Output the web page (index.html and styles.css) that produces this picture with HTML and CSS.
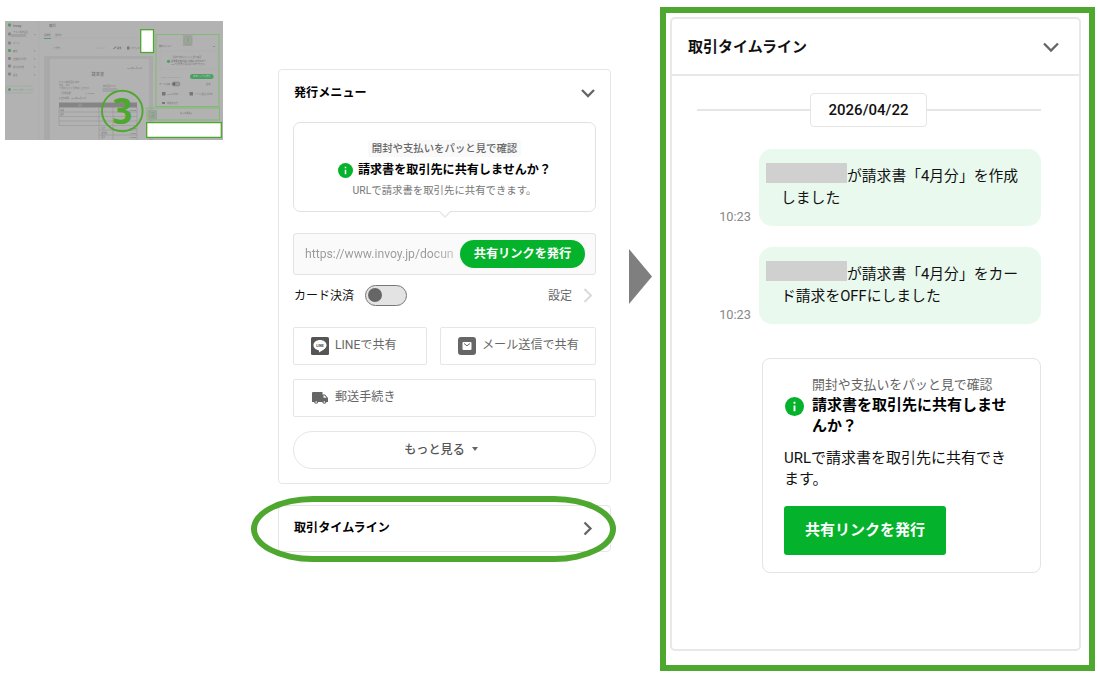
FILE: index.html
```html
<!DOCTYPE html>
<html lang="ja">
<head>
<meta charset="utf-8">
<title>取引タイムライン</title>
<link rel="stylesheet" href="styles.css">
</head>
<body>
<main class="page">
  <svg class="overview" width="218" height="119" viewBox="0 0 218 119">
    <rect width="218" height="119" fill="#b2b2b2"/>
    <rect x="39" y="35" width="109" height="84" fill="#a9a9a9"/>
    <rect x="45" y="38" width="99" height="81" fill="#b2b2b2"/>
    <path d="M34 0V119M34 17H148" stroke="#a9a9a9" stroke-width=".5"/>
    <path d="M39 17.500h7" stroke="#5e9c70" stroke-width="1"/>
    <g fill="#7b7b7b" class="tiny">
      <text x="8" y="5.500" class="tiny-head">invoy</text>
      <text x="8" y="12">テスト株式会社</text><text x="8" y="23">ホーム</text><text x="8" y="30.500" class="tiny-bold">取引</text>
      <text x="8" y="38.500">自動取引登録</text><text x="8" y="46.500">取引先管理</text><text x="8" y="54.500">設定</text>
      <text x="8" y="69.500" fill="#5e9c70" class="upgrade">アップグレード</text>
      <text x="40" y="5">‹</text><text x="44" y="5.500" class="tiny-head">取引</text>
      <text x="39" y="14.500" class="tiny-bold">請求書</text><text x="50" y="14.500">送付状</text>
      <text x="47" y="28">‹&#160; 下書き &#160;›</text><text x="90" y="28" fill="#999">プレビュー</text><text x="112" y="28" class="tiny-bold">編集</text><text x="126" y="28">ダウンロード</text>
      <text x="86.500" y="54.500" class="tiny-title">請求書</text>
      <text x="54" y="61.500">テスト株式会社 御中</text><text x="54" y="64.500" class="micro">件名：4月分</text><text x="54" y="67.500" class="micro">下記のとおりご請求申し上げます。</text>
      <text x="55" y="72.500">ご請求金額</text><text x="80" y="72.500">¥110,000</text><text x="54" y="77.500" class="micro">お支払期限：2026年05月31日</text>
      <text x="122" y="47.500" class="micro">2026年04月22日</text><text x="98" y="65.500" class="micro">株式会社テスト</text>
    </g>
    <g fill="#858585"><rect x="3" y="11.500" width="3" height="3" rx="1"/><rect x="3" y="20.500" width="3" height="3" rx="1"/><rect x="3" y="36" width="3" height="3" rx="1"/><rect x="3" y="43.500" width="3" height="3" rx="1"/><rect x="3" y="51.500" width="3" height="3" rx="1"/></g>
    <g fill="#559b69"><circle cx="4.500" cy="4" r="1.700"/><rect x="3" y="28" width="3" height="3" rx="1"/><circle cx="4.500" cy="68.500" r="1.500"/></g>
    <rect x="1" y="65" width="26" height="7" rx="1" fill="none" stroke="#8cab94" stroke-width=".5"/>
    <rect x="6" y="13" width="15" height="3" fill="#a1a1a1"/>
    <path d="M29 13l1 1 1-1M29 29l1 1-1 1M29 37l1 1-1 1M29 45l1 1-1 1M29 53l1 1-1 1" fill="none" stroke="#888" stroke-width=".6"/>
    <path d="M108.500 28l2.500-2.500" stroke="#666" stroke-width="1"/><rect x="122" y="25.500" width="2.500" height="3" fill="#777"/>
    <rect x="97.500" y="67" width="15" height="4" fill="#a3a3a3"/>
    <rect x="54" y="81.500" width="78" height="5" fill="#858585"/>
    <path d="M54 91h78M54 95.500h78M54 100h78M54 104.500h78M94 109h38M94 114h38M54 86v18.500M94 86v33M108 86v33M132 86v33" stroke="#969696" stroke-width=".6" fill="none"/>
    <g fill="#707070" class="micro"><text x="73" y="85" fill="#aaa">品目</text><text x="55" y="89.500">商品</text><text x="55" y="94">送料</text><text x="99" y="89.500">1</text><text x="124" y="89.500">100,000</text><text x="96" y="108">小計</text><text x="96" y="112.500">消費税</text><text x="96" y="117">合計</text><text x="124" y="108">100,000</text><text x="125" y="112.500">10,000</text><text x="124" y="117">110,000</text></g>
    <g fill="none" stroke="#80ba75" stroke-width="1"><rect x="151" y="13.500" width="63" height="72"/><rect x="142" y="87" width="72.500" height="12"/></g>
    <rect x="178" y="13" width="9.500" height="12" fill="#a2a2a2"/>
    <rect x="143" y="89" width="9" height="9.500" fill="#a2a2a2"/>
    <g fill="#63ad56" class="num-small"><text x="178.300" y="23">①</text><text x="143" y="97.300">②</text></g>
    <g fill="#777" class="tiny"><text x="154" y="26" class="tiny-bold">発行メニュー</text><text x="168" y="36.500" class="micro">開封や支払いをパッと見で確認</text><text x="166" y="41" class="tiny-bold">請求書を取引先に共有しませんか？</text><text x="166" y="44.300" class="micro">URLで請求書を取引先に共有できます。</text><text x="156" y="56.500" fill="#999">https://www.invoy.jp</text><text x="154" y="64">カード決済</text><text x="201" y="64">設定</text><text x="162" y="73.700">LINEで共有</text><text x="190" y="73.700">メール送信で共有</text><text x="162" y="83">郵送手続き</text><text x="175" y="93.300" class="tiny-bold">もっと見る ▾</text></g>
    <path d="M155 30h58v18h-58z" fill="none" stroke="#a8a8a8" stroke-width=".5"/>
    <circle cx="163.500" cy="40.300" r="1.600" fill="#4c9f65"/>
    <rect x="185" y="53" width="23.500" height="5" rx="2.500" fill="#4c9f65"/>
    <text x="188" y="56.400" fill="#bdd6c4" class="tiny">共有リンクを発行</text>
    <rect x="167" y="61" width="8" height="4" rx="2" fill="#999" stroke="#777" stroke-width=".5"/><circle cx="169" cy="63" r="1.400" fill="#666"/>
    <g fill="#777"><rect x="157" y="71" width="3.500" height="3.500"/><rect x="184.500" y="71" width="3.500" height="3.500"/><rect x="157" y="81" width="3" height="2"/></g>
    <path d="M208 25l1 1 1-1" fill="none" stroke="#777" stroke-width=".6"/>
    <rect x="135.700" y="8.700" width="12.800" height="22.800" fill="#fff" stroke="#4ea72e" stroke-width="1.300"/>
    <rect x="141.700" y="101.600" width="74.600" height="14.800" fill="#fff" stroke="#4ea72e" stroke-width="1.300"/>
    <circle cx="117.300" cy="90" r="20.300" fill="none" stroke="#4ea72e" stroke-width="1.900"/>
    <text x="117.200" y="103" text-anchor="middle" fill="#4ea72e" class="num-big">3</text>
  </svg>

  <section class="middle">
    <div class="card issue-card">
      <header class="head"><h2>発行メニュー</h2>
        <svg width="16" height="10" viewBox="0 0 16 10"><path d="M2 2l6 6 6-6" class="chev"/></svg></header>
      <div class="notice">
        <p class="caption">開封や支払いをパッと見で確認</p>
        <p class="question"><svg width="15" height="15" viewBox="0 0 20 20"><circle cx="10" cy="10" r="10" fill="#04b22b"/><path d="M9 5h2v2H9zM9 9h2v6H9z" fill="#fff"/></svg><b>請求書を取引先に共有しませんか？</b></p>
        <p class="sub">URLで請求書を取引先に共有できます。</p>
        <svg class="notch" width="14" height="8" viewBox="0 0 14 8"><path d="M1 0l6 6 6-6" fill="#fff" stroke="#e5e5e5" stroke-width="1.300"/></svg>
      </div>
      <div class="linkbox"><span class="url">https://www.invoy.jp/docun</span><button class="pill">共有リンクを発行</button></div>
      <div class="setting"><span>カード決済</span><i class="toggle"></i><span class="config">設定</span>
        <svg width="10" height="15" viewBox="0 0 10 15"><path d="M1.500 1l6.500 6.500L1.500 14" fill="none" stroke="#dadada" stroke-width="2"/></svg></div>
      <div class="shares">
        <div class="action"><svg width="18" height="18" viewBox="0 0 18 18"><rect width="18" height="18" rx="1.500" fill="#555"/><path d="M9 3C5.400 3 2.400 5.200 2.400 8.300c0 2.600 2.200 4.500 5 5 .9.200.7.800.6 2.200 3-1.500 7.600-4.200 7.600-7.200C15.600 5.200 12.600 3 9 3z" fill="#fff"/><text x="9" y="9.900" text-anchor="middle" class="line-word">LINE</text></svg>LINEで共有</div>
        <div class="action"><svg width="18" height="18" viewBox="0 0 18 18"><rect width="18" height="18" rx="3" fill="#666"/><rect x="4.500" y="5" width="9" height="8" rx="1" fill="#fff"/><path d="M6 6.500l3 2.300 3-2.300" fill="none" stroke="#666"/></svg>メール送信で共有</div>
      </div>
      <div class="action post"><svg width="18" height="14" viewBox="0 0 18 14"><path d="M2 1h9.500v2.500H14L17 7v4h-1.500a2.200 2.200 0 0 1-4.300 0H7.300a2.200 2.200 0 0 1-4.300 0H1V2a1 1 0 0 1 1-1z" fill="#666"/><path d="M12.500 4.500h1.200l1.800 2.300h-3z" fill="#fff"/><circle cx="5.200" cy="11" r=".8" fill="#fff"/><circle cx="13.300" cy="11" r=".8" fill="#fff"/></svg>郵送手続き</div>
      <button class="more">もっと見る<i></i></button>
    </div>
    <div class="card timeline-link"><h2>取引タイムライン</h2>
      <svg width="10" height="15" viewBox="0 0 10 15"><path d="M1.500 1.500l6 6-6 6" class="chev"/></svg>
      <div class="highlight"></div></div>
  </section>

  <svg class="arrow" width="24" height="56" viewBox="0 0 24 56"><path d="M0 0L23 27.500 0 55z" fill="#7f7f7f"/></svg>

  <section class="detail">
    <div class="panel">
      <header class="panel-head"><h2>取引タイムライン</h2>
        <svg width="18" height="12" viewBox="0 0 18 12"><path d="M2 2.500l7 7 7-7" class="chev"/></svg></header>
      <div class="feed">
        <div class="date"><span>2026/04/22</span></div>
        <div class="event"><time>10:23</time><p><i class="mask"></i>が請求書「4月分」を作成<br>しました</p></div>
        <div class="event"><time>10:23</time><p><i class="mask"></i>が請求書「4月分」をカー<br>ド請求をOFFにしました</p></div>
        <div class="promo">
          <div class="promo-title">
            <svg width="19" height="19" viewBox="0 0 20 20"><circle cx="10" cy="10" r="10" fill="#04b22b"/><path d="M9 5h2v2H9zM9 9h2v6H9z" fill="#fff"/></svg>
            <div><p class="promo-caption">開封や支払いをパッと見で確認</p><h3>請求書を取引先に共有しませ<br>んか？</h3></div>
          </div>
          <p class="promo-text">URLで請求書を取引先に共有でき<br>ます。</p>
          <button class="issue">共有リンクを発行</button>
        </div>
      </div>
    </div>
  </section>
</main>
</body>
</html>
```
FILE: styles.css
```css
* { box-sizing: border-box; }
body { margin: 0; background: #fff; color: #111; font-family: Roboto, "Noto Sans CJK JP", sans-serif; }
h2, h3, p { margin: 0; }
button { font-family: inherit; border: 0; padding: 0; }
svg { display: block; flex: none; }

.page { width: 1098px; height: 673px; display: flex; align-items: flex-start; overflow: hidden; }
.overview { margin: 21px 0 0 5px; }
.tiny { font-size: 2.200px; }
.tiny-bold { font-weight: 700; }
.tiny-head { font-size: 3.500px; font-weight: 700; }
.tiny-title { font-size: 4px; font-weight: 700; letter-spacing: .3px; }
.upgrade { font-size: 2.500px; }
.micro { font-size: 2px; }
.num-small { font-family: "Noto Sans CJK JP", sans-serif; font-size: 9px; }
.num-big { font-family: "Noto Sans", sans-serif; font-size: 35px; font-weight: 700; }

.chev { fill: none; stroke: #666; stroke-width: 2.300; }
.card { border: 1.500px solid #e6e6e6; border-radius: 4px; background: #fff; }
.middle { width: 333px; margin: 69px 0 0 55px; display: flex; flex-direction: column; gap: 21px; }
.middle h2 { font-size: 12.100px; line-height: 18px; font-weight: 700; color: #000; }
.issue-card { height: 415px; padding: 0 14px; }
.head { height: 52px; padding: 0 0 6px 1px; display: flex; align-items: center; justify-content: space-between; }
.notice { position: relative; height: 90px; border: 1px solid #e2e2e2; border-radius: 7px; padding-top: 17px; display: flex; flex-direction: column; align-items: center; }
.caption { font-size: 10.400px; line-height: 17px; font-weight: 500; color: #666; padding: 0 4px; background: #f9f9f9; border-radius: 3px; }
.question { display: flex; align-items: center; gap: 5px; font-size: 12.100px; line-height: 18px; margin-top: 4px; color: #000; }
.sub { font-size: 10.400px; line-height: 16px; margin-top: 4px; color: #777; }
.notch { position: absolute; left: 144px; bottom: -8px; }
.linkbox { height: 42px; margin-top: 21px; border: 1px solid #e3e3e3; border-radius: 3px; background: #fafafa; padding: 0 10px 0 11px; display: flex; align-items: center; gap: 6px; }
.url { width: 149px; white-space: nowrap; font-size: 12.200px; line-height: 18px; padding-bottom: 1px; color: transparent; background: linear-gradient(90deg, #999 85%, #c4c4c4); -webkit-background-clip: text; background-clip: text; }
.pill { width: 125px; height: 28px; border-radius: 14px; background: #04b22b; color: #fff; font-size: 12.200px; font-weight: 700; line-height: 26px; }
.setting { height: 40px; margin-bottom: 12px; padding-left: 1px; display: flex; align-items: center; font-size: 12px; }
.setting span { padding-bottom: 2px; }
.toggle { width: 42px; height: 21px; margin-left: 11px; border: 1.500px solid #777; border-radius: 11px; background: #e3e3e3; padding: 2px; }
.toggle::before { content: ""; display: block; width: 14px; height: 14px; border-radius: 50%; background: #666; }
.config { margin: 0 11px 0 auto; color: #666; }
.setting svg { margin-right: 3px; }
.shares { display: grid; grid-template-columns: 134px 156px; justify-content: space-between; }
.action { height: 38px; border: 1px solid #e6e6e6; border-radius: 2px; padding: 0 16px 5px 17px; display: flex; align-items: center; gap: 6px; font-size: 12.100px; color: #666; white-space: nowrap; }
.action svg { position: relative; top: 2px; }
.line-word { font-size: 3.500px; font-weight: 900; fill: #555; }
.post { margin-top: 14px; }
.more { width: 100%; height: 38px; margin-top: 14px; border: 1px solid #e6e6e6; border-radius: 19px; background: #fff; display: flex; align-items: center; justify-content: center; gap: 7px; padding-bottom: 4px; padding-right: 7px; font-size: 12.100px; font-weight: 500; color: #555; }
.more i { border: 3.500px solid transparent; border-top: 4px solid #666; border-bottom: 0; margin-top: 2px; }
.timeline-link { position: relative; height: 47px; display: flex; align-items: center; justify-content: space-between; padding: 0 17px 1px 15px; }
.highlight { position: absolute; left: -28px; top: -10px; width: 365px; height: 66px; border: 6px solid #4ea72e; border-radius: 62px / 33px; }

.arrow { margin: 249px 0 0 18px; }

.detail { width: 435px; height: 664px; margin: 7px 0 0 7px; border: 6px solid #4ea72e; padding: 4px 8px 14px 4px; }
.panel { height: 634px; border: 2px solid #e8e8e8; border-radius: 5px; }
.panel-head { height: 57px; border-bottom: 2px solid #e8e8e8; padding: 0 19px 0 16px; display: flex; align-items: center; justify-content: space-between; }
.panel h2 { font-size: 15px; line-height: 22px; font-weight: 700; color: #111; }
.feed { padding: 17px 38px 0 25px; }
.date { display: flex; align-items: center; font-size: 15px; font-weight: 500; }
.date::before, .date::after { content: ""; flex: 1; height: 1.500px; background: #e5e5e5; }
.date::after { flex: 0 0 114px; }
.date span { width: 117px; height: 34px; line-height: 32px; text-align: center; border: 1.500px solid #e5e5e5; border-radius: 4px; }
.event { display: flex; align-items: flex-end; justify-content: flex-end; gap: 8px; margin-top: 22px; }
.event + .event { margin-top: 21px; }
.event time { font-size: 12.800px; line-height: 18px; color: #888; }
.event p { width: 282px; height: 77px; padding: 16px 0 0 22px; border-radius: 13px; background: #e9f9ee; font-size: 14.800px; line-height: 22px; white-space: nowrap; }
.mask { display: inline-block; vertical-align: top; width: 81px; height: 20px; margin: -2px 0 0 -15px; background: #d0d0d0; }
.promo { width: 279px; height: 215px; margin: 34px 0 0 auto; border: 1.500px solid #e4e4e4; border-radius: 8px; padding: 16px 21px 0; }
.promo-title { display: flex; align-items: flex-start; gap: 8px; }
.promo-title svg { margin: 22px 0 0 1px; }
.promo-caption { font-size: 12.900px; line-height: 20px; color: #666; white-space: nowrap; }
.promo h3 { font-size: 15px; line-height: 21px; font-weight: 700; color: #000; white-space: nowrap; }
.promo-text { margin-top: 11px; font-size: 15px; line-height: 21px; white-space: nowrap; }
.issue { display: block; width: 162px; height: 49px; margin-top: 16px; border-radius: 3px; background: #04b22b; color: #fff; font-size: 15px; line-height: 47px; font-weight: 700; }
```
